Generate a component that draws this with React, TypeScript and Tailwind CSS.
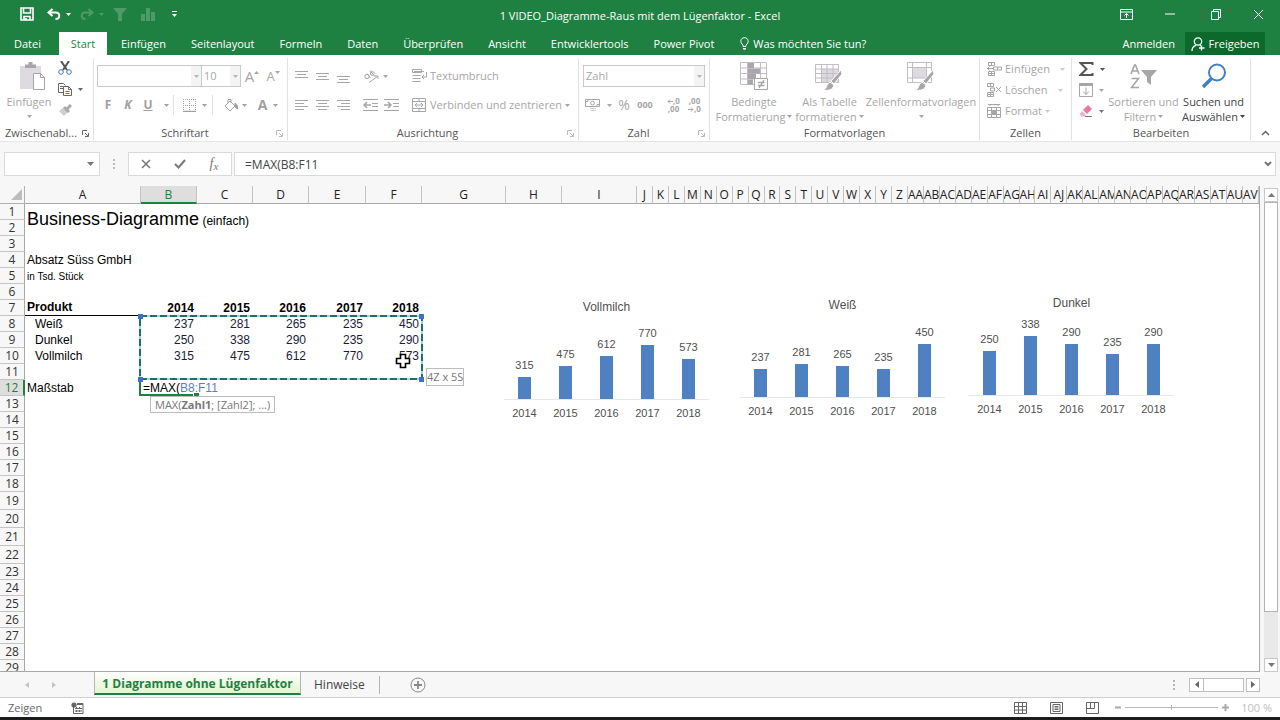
import type { ReactNode } from "react";

type IconProps = { w: number; h: number; className?: string; children: ReactNode };

function Icon({ w, h, className = "", children }: IconProps) {
  return (
    <svg width={w} height={h} viewBox={`0 0 ${w} ${h}`} fill="none" stroke="currentColor" className={`shrink-0 ${className}`} aria-hidden="true">
      {children}
    </svg>
  );
}

function Caret({ className = "" }: { className?: string }) {
  return (
    <Icon w={5} h={3} className={className}>
      <path d="M0 0h5L2.5 3z" fill="currentColor" stroke="none" />
    </Icon>
  );
}

function Tool({ label, className = "", children }: { label: string; className?: string; children?: ReactNode }) {
  return (
    <button type="button" aria-label={label} className={`flex h-5 shrink-0 items-center justify-center ${className}`}>
      {children}
    </button>
  );
}

function Divider() {
  return <span className="h-5 w-px shrink-0 bg-[#e1e1e1]" />;
}

function Group({ label, launcher, className = "", children }: { label: string; launcher?: "on" | "off"; className?: string; children: ReactNode }) {
  return (
    <section aria-label={label} className={`flex shrink-0 flex-col border-r border-[#e1e1e1] ${className}`}>
      <div className="flex h-[68px] shrink-0 text-[#a6a6a6]">{children}</div>
      <div className="flex h-[14px] shrink-0 items-center">
        <span className="flex-1 truncate text-center text-[#555]">{label}</span>
        {launcher && (
          <button type="button" aria-label={`${label} Optionen`} className={`mr-1 ${launcher === "on" ? "text-[#666]" : "text-[#bbb]"}`}>
            <Icon w={7} h={7}>
              <path d="M.5 5V.5H5M3 3l3 3M6.5 3v3.500H3" />
            </Icon>
          </button>
        )}
      </div>
    </section>
  );
}

function Lines({ rows }: { rows: [number, number, number][] }) {
  return (
    <Icon w={13} h={13}>
      {rows.map(([x, y, len]) => (
        <path key={y} d={`M${x} ${y}.5h${len}`} />
      ))}
    </Icon>
  );
}

function TitleBar() {
  return (
    <header className="grid h-8 shrink-0 grid-cols-3 items-center bg-[#1e8142] text-white">
      <div className="flex items-center pb-1 pl-[19px]">
        <Tool label="Speichern" className="w-[15px]">
          <Icon w={14} h={14}>
            <path d="M1 1h12v12H1zM3.500 1v5h7V1M4 13V9.500h6V13M6 11v2" strokeWidth="1.600" />
          </Icon>
        </Tool>
        <Tool label="Rückgängig" className="ml-3 w-4">
          <Icon w={14} h={12}>
            <path d="M5.500 1L1.500 4.500l4 3.500M2 4.500h6.500c5 0 5 6.500 0 6.500" strokeWidth="2" />
          </Icon>
        </Tool>
        <Caret className="ml-1" />
        <Tool label="Wiederholen" className="ml-2 w-4 text-[#4c9b69]">
          <Icon w={14} h={12}>
            <path d="M8.500 1l4 3.500-4 3.500M12 4.500H5.500c-5 0-5 6.500 0 6.500" strokeWidth="2" />
          </Icon>
        </Tool>
        <Caret className="ml-1 text-[#4c9b69]" />
        <Tool label="Filter" className="ml-2 w-4 text-[#4c9b69]">
          <Icon w={14} h={13}>
            <path d="M0 0h14L9 6v7H5V6z" fill="currentColor" stroke="none" />
          </Icon>
        </Tool>
        <Tool label="Diagramm" className="ml-3 w-4 text-[#4c9b69]">
          <Icon w={14} h={13}>
            <path d="M0 6h4v7H0zM5 0h4v13H5zM10 4h4v9h-4z" fill="currentColor" stroke="none" />
          </Icon>
        </Tool>
        <Tool label="Symbolleiste anpassen" className="ml-3 w-3">
          <Icon w={5} h={6}>
            <path d="M0 .5h5" />
            <path d="M0 3h5L2.500 6z" fill="currentColor" stroke="none" />
          </Icon>
        </Tool>
      </div>
      <h1 className="text-center whitespace-nowrap">1 VIDEO_Diagramme-Raus mit dem Lügenfaktor - Excel</h1>
      <div className="flex items-center justify-end gap-[27px] pr-4 pb-1">
        <Tool label="Menüband-Optionen">
          <Icon w={13} h={11}>
            <path d="M.5.5h12v10H.5zM.5 3h12M6.500 9V4.500M4.500 6.500l2-2 2 2" />
          </Icon>
        </Tool>
        <Tool label="Minimieren" className="w-5">
          <Icon w={10} h={2}>
            <path d="M0 1h10" />
          </Icon>
        </Tool>
        <Tool label="Verkleinern">
          <Icon w={11} h={11} className="mx-1">
            <path d="M.5 2.500h7v8h-7zM2.500 2.500v-2h7v8h-2" />
          </Icon>
        </Tool>
        <Tool label="Schließen">
          <Icon w={11} h={11}>
            <path d="M1 1l9 9M10 1l-9 9" />
          </Icon>
        </Tool>
      </div>
    </header>
  );
}

const tabs = ["Einfügen", "Seitenlayout", "Formeln", "Daten", "Überprüfen", "Ansicht", "Entwicklertools", "Power Pivot"];

function TabRow() {
  return (
    <nav className="flex h-[23px] shrink-0 items-stretch bg-[#1e8142] text-white">
      <button type="button" className="w-[59px] pr-1 text-center">
        Datei
      </button>
      <button type="button" className="w-12 bg-white text-center text-[#1e8142]">
        Start
      </button>
      <div className="flex gap-[25px] pl-[14px]">
        {tabs.map((tab) => (
          <button key={tab} type="button" className="whitespace-nowrap">
            {tab}
          </button>
        ))}
      </div>
      <button type="button" className="ml-[26px] flex items-center gap-1 whitespace-nowrap">
        <Icon w={9} h={13}>
          <path d="M3 9.500V8C-.5 5.500.5.700 4.500.700S9.500 5.500 6 8v1.500zM3 11.500h3M3.500 12.700h2" />
        </Icon>
        Was möchten Sie tun?
      </button>
      <div className="mr-[15px] ml-auto flex items-stretch gap-[10px]">
        <button type="button">Anmelden</button>
        <button type="button" className="flex w-20 items-center justify-center gap-1 bg-[#0b6a2b]">
          <Icon w={14} h={14}>
            <circle cx="7" cy="4.500" r="3.700" strokeWidth="1.300" />
            <path d="M1 14c0-3 1.500-5 4-5.700M9 8.300l1 .7M10.500 8.500v5M8 11h5.500" strokeWidth="1.300" />
          </Icon>
          Freigeben
        </button>
      </div>
    </nav>
  );
}

function BigTool({ lines, className = "", icon }: { lines: [string, string]; className?: string; icon: ReactNode }) {
  return (
    <button type="button" className={`flex shrink-0 flex-col items-center leading-[15px] whitespace-nowrap ${className}`}>
      <span className="flex h-9 items-center">{icon}</span>
      <span>{lines[0]}</span>
      <span className="flex h-[15px] items-center gap-[2px]">
        {lines[1]}
        <Caret />
      </span>
    </button>
  );
}

function Clipboard() {
  return (
    <Group label="Zwischenabl..." launcher="on" className="w-[94px]">
      <BigTool
        lines={["Einfügen", ""]}
        className="w-[58px]"
        icon={
          <Icon w={27} h={29} className="ml-[6px]">
            <path d="M1 4h21v23H1z" fill="#dedbe0" stroke="none" />
            <path d="M6 6V2.500h3.500V0h4v2.500H17V6z" fill="#aaa5ac" stroke="none" />
            <path d="M14.500 11.500h7l4 4v12h-11z" fill="#fff" />
            <path d="M21.500 11.500v4h4" />
          </Icon>
        }
      />
      <div className="flex flex-col gap-px">
        <Tool label="Ausschneiden" className="w-[14px] text-[#555]">
          <Icon w={14} h={14}>
            <path d="M3 0l6 9M11 0L5 9" strokeWidth="2" />
            <circle cx="3" cy="11" r="2.300" stroke="#4176b5" />
            <circle cx="11" cy="11" r="2.300" stroke="#4176b5" />
          </Icon>
        </Tool>
        <Tool label="Kopieren" className="gap-[6px] text-[#666]">
          <Icon w={14} h={13}>
            <path d="M5 9.500H.5v-9h5l2 2M2 3.500h3M2 5.500h3" />
            <path d="M5.500 3.500h5l3 3v6h-8z" fill="#fff" />
            <path d="M10.500 3.500v3h3M7.500 8.500h4M7.500 10.500h4" stroke="#4176b5" />
          </Icon>
          <Caret />
        </Tool>
        <Tool label="Format übertragen" className="w-[14px] text-[#aaa]">
          <Icon w={13} h={12}>
            <path d="M0 7l4-3 5 4-4 4z" fill="#cfcfcf" stroke="none" />
            <path d="M5 3l5 5M8 5l4-4" strokeWidth="3" />
          </Icon>
        </Tool>
      </div>
    </Group>
  );
}

function Combo({ label, value, className = "" }: { label: string; value: string; className?: string }) {
  return (
    <div className={`relative h-[22px] border border-[#c9c9c9] ${className}`}>
      <select aria-label={label} defaultValue={value} className="h-full w-full appearance-none bg-transparent px-[2px] text-[#a6a6a6] outline-none">
        <option>{value}</option>
      </select>
      <span className="pointer-events-none absolute inset-y-0 right-0 flex w-[10px] items-center justify-center bg-[#f4f4f4] text-[#b5b5b5]">
        <Caret />
      </span>
    </div>
  );
}

function FontGroup() {
  return (
    <Group label="Schriftart" launcher="off" className="w-[194px]">
      <div className="flex flex-col gap-2 pt-[7px] pl-[3px]">
        <div className="flex h-[22px] items-center">
          <Combo label="Schriftart" value="" className="w-[105px]" />
          <Combo label="Schriftgrad" value="10" className="-ml-px w-10" />
          <Tool label="Schriftgrad vergrößern" className="w-[22px] text-[15px]">
            A<Caret className="mb-2 rotate-180" />
          </Tool>
          <Tool label="Schriftgrad verkleinern" className="w-5 text-[13px]">
            A<Caret className="mb-2" />
          </Tool>
        </div>
        <div className="flex items-center font-bold text-[#a0a0a0]">
          <Tool label="Fett" className="w-[22px] text-[12px]">F</Tool>
          <Tool label="Kursiv" className="w-[18px] text-[12px] italic">K</Tool>
          <Tool label="Unterstrichen" className="w-[22px] text-[12px] underline">U</Tool>
          <Tool label="Unterstreichungsart" className="w-[14px]"><Caret /></Tool>
          <Divider />
          <Tool label="Rahmen" className="w-[38px] gap-[6px] pl-1 font-normal">
            <Icon w={13} h={13}>
              <path d="M.5 0v12M6.500 0v12M12.500 0v12M0 .5h13M0 6.500h13" strokeDasharray="1 1" />
              <path d="M0 12.500h13" strokeWidth="1.500" />
            </Icon>
            <Caret />
          </Tool>
          <Divider />
          <Tool label="Füllfarbe" className="w-10 gap-1 pl-1">
            <Icon w={14} h={13}>
              <path d="M1 7l5-5 5 5-5 5zM4 4V.5h3v3" />
              <path d="M11 4l2.500 3v3L11 8z" fill="currentColor" />
            </Icon>
            <Caret />
          </Tool>
          <Tool label="Schriftfarbe" className="w-[30px] gap-[6px] text-[14px]">
            A<Caret />
          </Tool>
        </div>
      </div>
    </Group>
  );
}

function AlignGroup() {
  return (
    <Group label="Ausrichtung" launcher="off" className="w-[291px]">
      <div className="flex flex-col gap-[9px] pt-2 pl-[3px]">
        <div className="flex items-center">
          <Tool label="Oben ausrichten" className="w-[21px]"><Lines rows={[[0, 1, 13], [2, 4, 9], [0, 7, 13]]} /></Tool>
          <Tool label="Zentriert ausrichten" className="w-[21px]"><Lines rows={[[0, 3, 13], [2, 6, 9], [0, 9, 13]]} /></Tool>
          <Tool label="Unten ausrichten" className="w-[21px]"><Lines rows={[[0, 6, 13], [2, 9, 9], [0, 12, 13]]} /></Tool>
          <span className="ml-[2px]"><Divider /></span>
          <Tool label="Ausrichtung" className="w-[38px] gap-1">
            <Icon w={16} h={14}>
              <circle cx="4" cy="7.500" r="2.200" />
              <path d="M4 4.500l3.500 4.500M7 1.500L12 7.500" />
              <circle cx="9.300" cy="4.500" r="1.900" />
              <path d="M6 13.500l8.500-6M11.500 7h3.500v3" />
            </Icon>
            <Caret />
          </Tool>
          <Tool label="Textumbruch" className="ml-[18px] gap-[3px]">
            <Icon w={15} h={14}>
              <path d="M.5.5h9v3h-9zM.5 6.500h8M.5 9.500h8M.5 12.500h8M14.500 3v5h-4M12 6l-2 2 2 2M2 2.500h10" />
            </Icon>
            Textumbruch
          </Tool>
        </div>
        <div className="flex items-center">
          <Tool label="Linksbündig" className="w-[21px]"><Lines rows={[[0, 1, 13], [0, 4, 9], [0, 7, 13], [0, 10, 9]]} /></Tool>
          <Tool label="Zentriert" className="w-[21px]"><Lines rows={[[0, 1, 13], [2, 4, 9], [0, 7, 13], [2, 10, 9]]} /></Tool>
          <Tool label="Rechtsbündig" className="w-[21px]"><Lines rows={[[0, 1, 13], [4, 4, 9], [0, 7, 13], [4, 10, 9]]} /></Tool>
          <span className="ml-[2px]"><Divider /></span>
          <Tool label="Einzug verkleinern" className="ml-1 w-[21px]">
            <Icon w={15} h={13}>
              <path d="M0 .5h15M9 4.500h6M9 7.500h6M0 11.500h15" />
              <path d="M1 6h7M4 3L1 6l3 3" strokeWidth="1.500" />
            </Icon>
          </Tool>
          <Tool label="Einzug vergrößern" className="w-5">
            <Icon w={15} h={13}>
              <path d="M0 .5h15M9 4.500h6M9 7.500h6M0 11.500h15" />
              <path d="M0 6h7M4 3l3 3-3 3" strokeWidth="1.500" />
            </Icon>
          </Tool>
          <Tool label="Verbinden und zentrieren" className="ml-[11px] gap-[3px] whitespace-nowrap">
            <Icon w={15} h={14}>
              <path d="M.5.5h13v13H.5zM.5 3.500h13M.5 10.500h13M7 .5v3M7 10.500v3M3 7h8M5 5L3 7l2 2M9 5l2 2-2 2" />
            </Icon>
            Verbinden und zentrieren
            <Caret />
          </Tool>
        </div>
      </div>
    </Group>
  );
}

function ShortArrow({ right = false }: { right?: boolean }) {
  return (
    <Icon w={6} h={5} className={right ? "rotate-180" : ""}>
      <path d="M1 2.500h5M3 .5l-2 2 2 2" />
    </Icon>
  );
}

function NumberGroup() {
  return (
    <Group label="Zahl" launcher="off" className="w-[131px]">
      <div className="flex flex-col gap-2 pt-[7px] pl-1">
        <Combo label="Zahlenformat" value="Zahl" className="w-[122px]" />
        <div className="flex items-center">
          <Tool label="Währung" className="w-[30px] gap-[6px]">
            <Icon w={16} h={14}>
              <path d="M.5 1.500h14v7H.5zM3 1.500v2H.5M12 8.500v-2h2.500" />
              <circle cx="7.500" cy="5" r="1.900" />
              <path d="M5 10.500h6M5.500 12.500h5" stroke="#ccc" />
            </Icon>
            <Caret />
          </Tool>
          <Tool label="Prozent" className="w-[22px] text-[14px]">%</Tool>
          <Tool label="Tausendertrennzeichen" className="w-5 text-[9px] font-bold">000</Tool>
          <span className="mx-1"><Divider /></span>
          <Tool label="Dezimalstelle hinzufügen" className="w-[21px] flex-col text-[8px] leading-[8px] font-bold">
            <span className="flex items-center"><ShortArrow />,0</span>
            <span>,00</span>
          </Tool>
          <Tool label="Dezimalstelle entfernen" className="w-[21px] flex-col text-[8px] leading-[8px] font-bold">
            <span>,00</span>
            <span className="flex items-center"><ShortArrow right />,0</span>
          </Tool>
        </div>
      </div>
    </Group>
  );
}

function Brush() {
  return (
    <>
      <path d="M26 8l-10 11 3 3 8-10z" fill="#aaa5ac" stroke="#fff" />
      <path d="M8 28c4 0 3-6 7-8l4 3c-1 5-6 6-11 5z" fill="#aaa5ac" stroke="#fff" />
    </>
  );
}

function StyleGroup() {
  return (
    <Group label="Formatvorlagen" className="w-[270px]">
      <BigTool
        lines={["Bedingte", "Formatierung"]}
        className="w-[84px] pl-1"
        icon={
          <Icon w={29} h={29}>
            <path d="M.5.5h26v22H.5zM.5 6h26M.5 11.500h26M.5 17h26M7.500.5v22M20.500.5v22" stroke="#c2bcc5" />
            <path d="M8 1h6v5H8zM8 6.500h12v5H8zM8 12h8v5H8zM8 17.500h5v5H8z" fill="#aaa5ac" stroke="none" />
            <path d="M14.500 16.500h13v11h-13z" fill="#fff" />
            <path d="M18 20.500h6.500M18 23.500h6.500M19 26l5-8" strokeWidth="1.300" />
          </Icon>
        }
      />
      <BigTool
        lines={["Als Tabelle", "formatieren"]}
        className="w-[71px]"
        icon={
          <Icon w={29} h={29}>
            <path d="M7 7h16v14H7z" fill="#dedbe0" stroke="none" />
            <path d="M.5 2.500h23v18H.5zM.5 7h23M.5 11.500h23M.5 16h23M6.500 2.500v18M12 2.500v18M18 2.500v18" stroke="#c2bcc5" />
            <Brush />
          </Icon>
        }
      />
      <BigTool
        lines={["Zellenformatvorlagen", ""]}
        className="w-[112px]"
        icon={
          <Icon w={29} h={29}>
            <path d="M6 6h13v10H6z" fill="#dedbe0" stroke="none" />
            <path d="M.5.5h24v20H.5zM.5 5.500h24M.5 16h24M5.500.5v20M19.500.5v20" stroke="#c2bcc5" />
            <Brush />
          </Icon>
        }
      />
    </Group>
  );
}

function CellsGroup() {
  return (
    <Group label="Zellen" className="w-[92px]">
      <div className="flex flex-col gap-px pt-px pl-[7px]">
        <Tool label="Zellen einfügen" className="justify-start gap-[3px]">
          <Icon w={15} h={14}>
            <path d="M1.500.5h6v3h-6zM1.500 9.500h6v4h-6zM4.500.5v3M4.500 9.500v4M1.500 11.500h6M6.500 5h8v3h-8zM10.500 5v3M0 6.500h6M2.500 4.500l-2 2 2 2" />
          </Icon>
          Einfügen
          <Caret className="ml-[7px] text-[#ccc]" />
        </Tool>
        <Tool label="Zellen löschen" className="justify-start gap-[3px]">
          <Icon w={15} h={14}>
            <path d="M.5.5h6v3h-6zM.5 9.500h6v4h-6zM3.500.5v3M3.500 9.500v4M.5 11.500h6M3.500 5h4v3h-4zM9 4l5 5M14 4l-5 5" />
          </Icon>
          Löschen
          <Caret className="ml-[7px] text-[#ccc]" />
        </Tool>
        <Tool label="Zellen formatieren" className="justify-start gap-[3px]">
          <Icon w={15} h={14}>
            <path d="M1 .5h12M3 0v2M11 0v2M.5 3.500h13v10H.5zM.5 6.500h13M.5 10.500h13M4.500 3.500v10M9.500 3.500v10" />
            <path d="M4 6h6v5H4z" fill="currentColor" stroke="none" />
          </Icon>
          Format
          <Caret className="text-[#ccc]" />
        </Tool>
      </div>
    </Group>
  );
}

function EditGroup() {
  return (
    <Group label="Bearbeiten" className="w-[179px]">
      <div className="flex w-9 flex-col gap-px pt-px pl-[7px]">
        <Tool label="Summe" className="justify-start gap-[6px] text-[#555]">
          <Icon w={15} h={14}>
            <path d="M13.500 3V1H1.500l6 6-6 6h12v-2" strokeWidth="2" />
          </Icon>
          <Caret />
        </Tool>
        <Tool label="Ausfüllen" className="justify-start gap-[6px]">
          <Icon w={14} h={14}>
            <path d="M.5.5h13v13H.5zM7 4.500v7M4 8.500l3 3 3-3" />
            <path d="M0 0h14v3H0z" fill="currentColor" stroke="none" />
          </Icon>
          <Caret />
        </Tool>
        <Tool label="Löschen" className="justify-start gap-[6px] text-[#777]">
          <Icon w={14} h={12}>
            <path d="M4 5l5-5 4 4-5 5z" fill="#e8799c" stroke="none" />
            <path d="M3 6l4 4-1.500 1.500H2.500L.5 9z" fill="#f3b1c5" stroke="none" />
            <path d="M6 11.500h7" />
          </Icon>
          <Caret />
        </Tool>
      </div>
      <BigTool
        lines={["Sortieren und", "Filtern"]}
        className="w-[71px]"
        icon={
          <Icon w={27} h={26}>
            <path d="M1 11L4.500 2h1L9 11M2.500 8h5M1.500 15.500h7l-7 9h7.500" strokeWidth="1.600" />
            <path d="M11 7h16l-6 7v8l-4-3v-5z" fill="currentColor" stroke="none" />
          </Icon>
        }
      />
      <BigTool
        lines={["Suchen und", "Auswählen"]}
        className="w-[69px] text-[#444]"
        icon={
          <Icon w={26} h={26} className="text-[#4380bf]">
            <circle cx="16" cy="9.500" r="8" strokeWidth="2" />
            <path d="M10.500 15.500L2 24" strokeWidth="3.500" />
          </Icon>
        }
      />
    </Group>
  );
}

function Ribbon() {
  return (
    <div className="flex h-[87px] shrink-0 border-b border-[#e4e4e4] bg-white pt-[3px] pb-px">
      <Clipboard />
      <FontGroup />
      <AlignGroup />
      <NumberGroup />
      <StyleGroup />
      <CellsGroup />
      <EditGroup />
      <button type="button" aria-label="Menüband reduzieren" className="ml-auto flex items-end pr-[10px] pb-1 text-[#666]">
        <Icon w={9} h={6}>
          <path d="M1 5l3.500-3.500L8 5" strokeWidth="1.500" />
        </Icon>
      </button>
    </div>
  );
}

function FormulaBar() {
  return (
    <div className="flex h-11 shrink-0 items-center bg-[#f7f7f7] pr-1 pl-1 text-[#777]">
      <div className="flex h-6 w-24 items-center border border-[#dadada] bg-white pr-[5px]">
        <input type="text" aria-label="Namenfeld" className="min-w-0 flex-1 bg-transparent px-1 outline-none" />
        <button type="button" aria-label="Namen anzeigen">
          <Icon w={7} h={4}>
            <path d="M0 0h7L3.500 4z" fill="currentColor" stroke="none" />
          </Icon>
        </button>
      </div>
      <span className="flex w-7 justify-center text-[#bbb]">
        <Icon w={2} h={11}>
          <path d="M1 0v11" strokeWidth="2" strokeDasharray="2 2" />
        </Icon>
      </span>
      <div className="flex h-6 w-[104px] items-center justify-around border border-[#dadada] bg-white">
        <Tool label="Abbrechen" className="w-7">
          <Icon w={10} h={10}>
            <path d="M1 1l8 8M9 1L1 9" strokeWidth="1.500" />
          </Icon>
        </Tool>
        <Tool label="Eingeben" className="w-7">
          <Icon w={12} h={10}>
            <path d="M1 5l3.500 3.500L11 1" strokeWidth="2" />
          </Icon>
        </Tool>
        <Tool label="Funktion einfügen" className="w-7 font-['Liberation_Serif',serif] text-[14px] italic">
          f<span className="mt-1 text-[11px]">x</span>
        </Tool>
      </div>
      <div className="ml-[2px] flex h-6 flex-1 items-center border border-[#dadada] bg-white pr-[3px]">
        <input type="text" aria-label="Bearbeitungsleiste" defaultValue="=MAX(B8:F11" className="h-full flex-1 bg-transparent pl-[10px] text-[12px] text-[#444] outline-none" />
        <button type="button" aria-label="Bearbeitungsleiste erweitern">
          <Icon w={8} h={6}>
            <path d="M1 1l3 3 3-3" strokeWidth="2" />
          </Icon>
        </button>
      </div>
    </div>
  );
}

const fixedCols = [
  { name: "A", width: "w-[116px]" },
  { name: "B", width: "w-[56px]" },
  { name: "C", width: "w-[56px]" },
  { name: "D", width: "w-[56px]" },
  { name: "E", width: "w-[57px]" },
  { name: "F", width: "w-[56px]" },
  { name: "G", width: "w-[84px]" },
  { name: "H", width: "w-[56px]" },
  { name: "I", width: "w-[75px]" },
];

const alphabet = "ABCDEFGHIJKLMNOPQRSTUVWXYZ".split("");
const narrowCols = [...alphabet.slice(9), ...alphabet.slice(0, 22).map((c) => `A${c}`)];
const colCount = fixedCols.length + narrowCols.length;

const years = [2014, 2015, 2016, 2017, 2018];

const products: Record<number, { name: string; values: number[] }> = {
  8: { name: "Weiß", values: [237, 281, 265, 235, 450] },
  9: { name: "Dunkel", values: [250, 338, 290, 235, 290] },
  10: { name: "Vollmilch", values: [315, 475, 612, 770, 573] },
};

function rowCells(row: number) {
  if (row === 1) {
    return (
      <td rowSpan={2} colSpan={colCount} className="pl-[2px] text-[12px]">
        <span className="text-[18px]">Business-Diagramme</span> (einfach)
      </td>
    );
  }
  if (row === 2) return null;
  if (row === 4) return <td colSpan={colCount} className="pl-[2px]">Absatz Süss GmbH</td>;
  if (row === 5) return <td colSpan={colCount} className="pl-[2px] text-[10px]">in Tsd. Stück</td>;
  if (row === 7) {
    return (
      <>
        <th scope="col" className="border-b border-black pl-[2px] text-left">Produkt</th>
        {years.map((year) => (
          <th key={year} scope="col" className="pr-[3px] text-right">{year}</th>
        ))}
        <td colSpan={colCount - 6} />
      </>
    );
  }
  if (row === 12) {
    return (
      <>
        <td className="pl-[2px]">Maßstab</td>
        <td colSpan={2} className="pl-[2px]">
          =MAX(<span className="text-[#5b7fc7]">B8:F11</span>
        </td>
        <td colSpan={colCount - 3} />
      </>
    );
  }
  const product = products[row];
  if (product) {
    return (
      <>
        <td className="pl-[10px]">{product.name}</td>
        {product.values.map((value, i) => (
          <td key={years[i]} className="pr-[3px] text-right text-[#1c1c3c]">{value}</td>
        ))}
        <td colSpan={colCount - 6} />
      </>
    );
  }
  return <td colSpan={colCount} />;
}

function BarChart({ title, values, scale, className }: { title: string; values: number[]; scale: number; className: string }) {
  return (
    <figure className={`absolute w-[205px] font-['Liberation_Sans',Arial,sans-serif] text-[11px] leading-4 text-[#505050] ${className}`}>
      <figcaption className="h-4 text-center text-[12px]">{title}</figcaption>
      <div className="flex h-[85px] items-end border-b border-[#e4e8ec]">
        {values.map((value, i) => (
          <div key={years[i]} className="flex flex-1 flex-col items-center gap-1">
            <span>{value}</span>
            <div className="w-[13px] bg-[#4f81c2]" style={{ height: Math.round(value * scale) }} />
          </div>
        ))}
      </div>
      <div className="mt-[5px] flex">
        {years.map((year) => (
          <span key={year} className="flex-1 text-center">{year}</span>
        ))}
      </div>
    </figure>
  );
}

function Selection() {
  return (
    <>
      <svg className="absolute top-[127px] left-[137px]" width="287" height="84" viewBox="0 0 287 84" fill="none">
        <path d="M3 3H285V66H3z" stroke="#a9cfe4" strokeWidth="2" />
        <path d="M3 3H285V66H3z" stroke="#1f6f68" strokeWidth="2" strokeDasharray="7 3" />
        <path d="M3 67V82H56" stroke="#1e8142" strokeWidth="2" />
        <path d="M57 80h5v4h-5z" fill="#1e8142" />
        <path d="M1 1h5v5H1zM282 1h5v5h-5zM1 64h5v5H1zM282 64h5v5h-5z" fill="#3e72c4" />
      </svg>
      <div className="absolute top-[182px] left-[426px] border border-[#bcbcbc] bg-white leading-4 text-[#777]">4Z x 5S</div>
      <div className="absolute top-[210px] left-[150px] border border-[#bcbcbc] bg-white px-1 leading-[15px] whitespace-nowrap text-[#777]">
        MAX(<b>Zahl1</b>; [Zahl2]; ...)
      </div>
      <svg className="absolute top-[167px] left-[395px]" width="16" height="16" viewBox="0 0 16 16">
        <path d="M5.500 1.500h5v4h4v5h-4v4h-5v-4h-4v-5h4z" fill="#fff" stroke="#000" strokeWidth="1.600" />
      </svg>
    </>
  );
}

function rowHeight(row: number) {
  return row >= 19 && row <= 22 ? "h-[18px]" : "h-4";
}

function Sheet() {
  return (
    <div className="relative min-w-0 flex-1 overflow-hidden border-r border-b border-[#a8a8a8] bg-white">
      <table className="w-full table-fixed border-separate border-spacing-0 font-['Liberation_Sans',Arial,sans-serif] text-[12px] leading-[15px] text-black">
        <colgroup>
          <col className="w-[25px]" />
          {fixedCols.map((col) => (
            <col key={col.name} className={col.width} />
          ))}
          {narrowCols.map((name) => (
            <col key={name} />
          ))}
        </colgroup>
        <thead className="font-['Open_Sans',sans-serif] text-[#222]">
          <tr className="h-[18px]">
            <th className="border-r border-b border-[#b0b0b0] bg-[#f7f7f7] p-0">
              <Icon w={11} h={11} className="mr-[2px] ml-auto">
                <path d="M11 0v11H0z" fill="#bdbdbd" stroke="none" />
              </Icon>
            </th>
            {[...fixedCols.map((col) => col.name), ...narrowCols].map((name) => (
              <th
                key={name}
                scope="col"
                className={
                  name === "B"
                    ? "border-r border-b-2 border-r-[#c4c4c4] border-b-[#1e8142] bg-[#dedede] p-0 font-normal text-[#1e8142]"
                    : "overflow-hidden border-r border-b border-r-[#c4c4c4] border-b-[#a8a8a8] bg-[#f7f7f7] p-0 font-normal whitespace-nowrap"
                }
              >
                {name}
              </th>
            ))}
          </tr>
        </thead>
        <tbody>
          {Array.from({ length: 29 }, (_, i) => i + 1).map((row) => (
            <tr key={row} className={rowHeight(row)}>
              <th
                scope="row"
                className={
                  row === 12
                    ? "border-r-2 border-b border-r-[#1e8142] border-b-[#c4c4c4] bg-[#dedede] p-0 font-['Open_Sans',sans-serif] font-normal text-[#1e8142]"
                    : "border-r border-b border-r-[#a8a8a8] border-b-[#c4c4c4] bg-[#f7f7f7] p-0 font-['Open_Sans',sans-serif] font-normal text-[#333]"
                }
              >
                {row}
              </th>
              {rowCells(row)}
            </tr>
          ))}
        </tbody>
      </table>
      <Selection />
      <BarChart title="Vollmilch" values={products[10].values} scale={0.07} className="top-[113px] left-[504px]" />
      <BarChart title="Weiß" values={products[8].values} scale={0.118} className="top-[111px] left-[740px]" />
      <BarChart title="Dunkel" values={products[9].values} scale={0.1746} className="top-[109px] left-[969px]" />
    </div>
  );
}

function VerticalScroll() {
  return (
    <div className="flex w-5 shrink-0 flex-col bg-[#f7f7f7] pt-[2px] pr-[2px] pl-1 text-[#777]">
      <button type="button" aria-label="Nach oben" className="flex h-[14px] items-center justify-center border border-[#c8c8c8] bg-white">
        <Icon w={7} h={4}><path d="M0 4h7L3.500 0z" fill="currentColor" stroke="none" /></Icon>
      </button>
      <div className="flex-1 bg-[#e9e9e9]">
        <div className="h-[90%] border border-[#b4b4b4] bg-white" />
      </div>
      <button type="button" aria-label="Nach unten" className="flex h-[14px] items-center justify-center border border-[#c8c8c8] bg-white">
        <Icon w={7} h={4}><path d="M0 0h7L3.500 4z" fill="currentColor" stroke="none" /></Icon>
      </button>
    </div>
  );
}

function SheetTabs() {
  return (
    <div className="flex h-[26px] shrink-0 items-center border-b border-[#cfcfcf] bg-[#f7f7f7]">
      <div className="flex w-[94px] items-center gap-[23px] pl-[25px] text-[#c4c4c4]">
        <button type="button" aria-label="Vorheriges Blatt">
          <Icon w={4} h={6}><path d="M4 0v6L0 3z" fill="currentColor" stroke="none" /></Icon>
        </button>
        <button type="button" aria-label="Nächstes Blatt">
          <Icon w={4} h={6}><path d="M0 0v6l4-3z" fill="currentColor" stroke="none" /></Icon>
        </button>
      </div>
      <button type="button" className="h-[23px] w-[207px] self-start border-x border-b-2 border-x-[#b4b4b4] border-b-[#1e8142] bg-linear-to-b from-white to-[#e2f5cf] pt-[3px] text-center text-[12px] font-bold whitespace-nowrap text-[#1e8142]">
        1 Diagramme ohne Lügenfaktor
      </button>
      <button type="button" className="ml-[13px] text-[12px] text-[#444]">Hinweise</button>
      <span className="ml-[14px] h-[18px] w-px bg-[#b4b4b4]" />
      <button type="button" aria-label="Neues Blatt" className="ml-[30px] text-[#888]">
        <Icon w={16} h={16}>
          <circle cx="8" cy="8" r="7" />
          <path d="M8 4v8M4 8h8" strokeWidth="1.800" />
        </Icon>
      </button>
      <span className="mr-[14px] ml-auto text-[#b4b4b4]">
        <Icon w={2} h={10}><path d="M1 0v10" strokeWidth="2" strokeDasharray="2 2" /></Icon>
      </span>
      <div className="mr-5 flex h-[14px] text-[#666]">
        <button type="button" aria-label="Nach links" className="flex w-[15px] items-center justify-center border border-[#c0c0c0] bg-white">
          <Icon w={4} h={7}><path d="M4 0v7L0 3.500z" fill="currentColor" stroke="none" /></Icon>
        </button>
        <div className="w-10 border border-l-0 border-[#c0c0c0] bg-white" />
        <button type="button" aria-label="Nach rechts" className="ml-[2px] flex w-[14px] items-center justify-center border border-[#c0c0c0] bg-white">
          <Icon w={4} h={7}><path d="M0 0v7l4-3.500z" fill="currentColor" stroke="none" /></Icon>
        </button>
      </div>
    </div>
  );
}

function StatusBar() {
  return (
    <footer className="flex h-[22px] shrink-0 items-center border-b-[3px] border-[#1c1c1c] bg-white pr-2 pl-2 text-[#666]">
      <span>Zeigen</span>
      <button type="button" aria-label="Makro aufzeichnen" className="ml-[29px]">
        <Icon w={13} h={12}>
          <path d="M2.500 4v7.500h9.500V1.500H6M6 2.500h6M4 6.500h7M4 9h7" />
          <path d="M5.500 5v6M8.500 5v6" strokeDasharray="2 1" />
          <circle cx="3" cy="3" r="2.600" fill="currentColor" stroke="none" />
        </Icon>
      </button>
      <div className="ml-auto flex items-center gap-[23px]">
        <button type="button" aria-label="Normal">
          <Icon w={13} h={12}><path d="M.5.5h12v11H.5zM4.500.5v11M8.500.5v11M.5 4.500h12M.5 8h12" /></Icon>
        </button>
        <button type="button" aria-label="Seitenlayout">
          <Icon w={13} h={12}><path d="M.5.5h12v11H.5zM3 2.500h7v7H3zM4.500 4.500h4M4.500 6h4M4.500 7.500h4" /></Icon>
        </button>
        <button type="button" aria-label="Umbruchvorschau">
          <Icon w={13} h={12}><path d="M.5.5h12v11H.5zM4.500.5v6M8.500.5v6M.5 6.500h8" /></Icon>
        </button>
      </div>
      <div className="ml-4 flex items-center text-[#aaa]">
        <button type="button" aria-label="Verkleinern">
          <Icon w={6} h={7}><path d="M0 3.500h6" strokeWidth="2" /></Icon>
        </button>
        <input
          type="range"
          aria-label="Zoom"
          defaultValue={50}
          className="mx-1 h-px w-[93px] appearance-none bg-[#b8b8b8] [&::-webkit-slider-thumb]:h-[5px] [&::-webkit-slider-thumb]:w-px [&::-webkit-slider-thumb]:appearance-none [&::-webkit-slider-thumb]:bg-[#b8b8b8]"
        />
        <button type="button" aria-label="Vergrößern">
          <Icon w={7} h={7}><path d="M0 3.500h7M3.500 0v7" strokeWidth="2" /></Icon>
        </button>
        <span className="ml-3 text-[#c0c0c0]">100 %</span>
      </div>
    </footer>
  );
}

export default function App() {
  return (
    <div className="flex h-screen w-full flex-col overflow-hidden bg-[#f7f7f7] font-['Open_Sans','Noto_Sans',sans-serif] text-[11px] leading-4">
      <TitleBar />
      <TabRow />
      <Ribbon />
      <FormulaBar />
      <main className="flex min-h-0 flex-1">
        <Sheet />
        <VerticalScroll />
      </main>
      <SheetTabs />
      <StatusBar />
    </div>
  );
}
